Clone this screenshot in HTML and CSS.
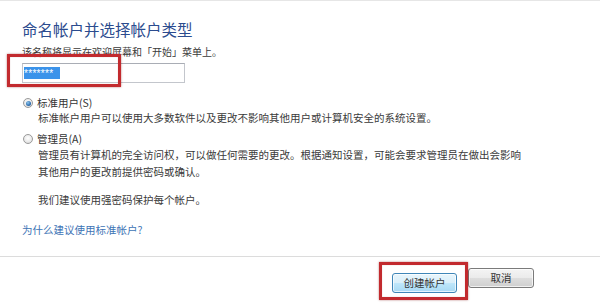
FILE: index.html
```html
<!DOCTYPE html>
<html lang="zh-CN">
<head>
<meta charset="utf-8">
<title>命名帐户并选择帐户类型</title>
<link rel="stylesheet" href="styles.css">
</head>
<body>
<div class="page">
  <main class="main">
    <h1 class="title">命名帐户并选择帐户类型</h1>
    <p class="subtitle">该名称将显示在欢迎屏幕和「开始」菜单上。</p>
    <div class="field-wrap marked">
      <div class="field"><span class="sel">*******</span></div>
    </div>

    <div class="option first">
      <span class="radio checked"></span>
      <span class="opt-label">标准用户(S)</span>
    </div>
    <p class="desc d1">标准帐户用户可以使用大多数软件以及更改不影响其他用户或计算机安全的系统设置。</p>

    <div class="option second">
      <span class="radio"></span>
      <span class="opt-label">管理员(A)</span>
    </div>
    <p class="desc d2">管理员有计算机的完全访问权，可以做任何需要的更改。根据通知设置，可能会要求管理员在做出会影响<br>其他用户的更改前提供密码或确认。</p>

    <p class="desc rec">我们建议使用强密码保护每个帐户。</p>

    <a class="link" href="#">为什么建议使用标准帐户?</a>
  </main>
  <footer class="footer">
    <span class="btn-wrap marked-btn"><button class="btn primary">创建帐户</button></span>
    <button class="btn">取消</button>
  </footer>
</div>
</body>
</html>
```

FILE: styles.css
```css
html, body {
  margin: 0;
  padding: 0;
  background: #ffffff;
}
body {
  font-family: "Noto Sans CJK SC", "Microsoft YaHei", "Noto Sans", sans-serif;
  color: #3a3a3a;
  width: 600px;
  height: 307px;
  overflow: hidden;
}
.page {
  border-top: 1px solid #e6e6e6;
  height: 306px;
  display: flex;
  flex-direction: column;
}
.main {
  padding-left: 22px;
  height: 256px;
  border-bottom: 1px solid #dcdcdc;
  box-sizing: border-box;
  display: flex;
  flex-direction: column;
  align-items: flex-start;
}
.title {
  margin: 18px 0 0;
  font-size: 15.5px;
  line-height: 20px;
  font-weight: normal;
  color: #2b4b8e;
  letter-spacing: 0;
}
.subtitle {
  margin: 6px 0 0;
  font-size: 10px;
  line-height: 14px;
  color: #3a3a3a;
}
.field-wrap {
  position: relative;
  margin-top: 4px;
}
.field {
  width: 163px;
  height: 20px;
  box-sizing: border-box;
  border: 1px solid #c3c6cc;
  border-top-color: #a9adb5;
  background: #fff;
  padding: 3px 0 0 1px;
}
.sel {
  display: inline-block;
  width: 36px;
  height: 12px;
  background: #3b93ea;
  color: #ffffff;
  font-family: "Liberation Sans", sans-serif;
  font-size: 10px;
  line-height: 14px;
  letter-spacing: 0.3px;
  overflow: hidden;
  vertical-align: top;
}
.marked::after {
  content: "";
  position: absolute;
  left: -15px;
  top: -9px;
  width: 114px;
  height: 33px;
  box-sizing: border-box;
  border: 3px solid #c22a2e;
  box-shadow: 0 0 2px rgba(120, 0, 0, 0.5), inset 0 0 1px rgba(120, 0, 0, 0.4);
}
.option {
  display: flex;
  align-items: center;
  gap: 4px;
  font-size: 10.5px;
  line-height: 14px;
  color: #333;
}
.option.first { margin-top: 13px; }
.option.second { margin-top: 7px; }
.radio {
  width: 10px;
  height: 10px;
  box-sizing: border-box;
  border-radius: 50%;
  border: 1px solid #9a9a9a;
  background: radial-gradient(circle at 50% 40%, #ffffff 0%, #e9e9e9 60%, #d2d2d2 100%);
  display: flex;
  align-items: center;
  justify-content: center;
  margin-left: 1px;
}
.radio.checked::before {
  content: "";
  width: 5px;
  height: 5px;
  border-radius: 50%;
  background: radial-gradient(circle at 40% 35%, #8fc7ee 0%, #2f6fb0 60%, #1d4f87 100%);
}
.desc {
  margin: 0;
  padding-left: 16px;
  font-size: 10.5px;
  color: #3a3a3a;
  white-space: nowrap;
}
.d1 { margin-top: 1px; line-height: 14px; }
.d2 { line-height: 17px; }
.rec { margin-top: 13px; line-height: 14px; }
.link {
  margin-top: 16px;
  font-size: 10.5px;
  line-height: 14px;
  color: #3d73b5;
  text-decoration: none;
}
.footer {
  display: flex;
  justify-content: flex-end;
  align-items: flex-start;
  gap: 11px;
  padding: 11px 66px 0 0;
  background: #ffffff;
}
.btn {
  height: 20px;
  width: 66px;
  box-sizing: border-box;
  padding: 0;
  font-family: "Noto Sans CJK SC", "Microsoft YaHei", sans-serif;
  font-size: 10.5px;
  line-height: 18px;
  color: #333;
  border: 1px solid #7b7b7b;
  border-radius: 3px;
  background: linear-gradient(#f4f4f4 0%, #ebebeb 48%, #dddddd 52%, #cfcfcf 100%);
  box-shadow: inset 0 0 0 1px rgba(255,255,255,0.7);
}
.btn.primary {
  width: 65px;
  border-color: #3f86b8;
  background: linear-gradient(#e8f5fc 0%, #d9effa 48%, #bee6fa 52%, #a7d9f4 100%);
}
.btn-wrap {
  position: relative;
  display: block;
  height: 20px;
}
.marked-btn::after {
  content: "";
  position: absolute;
  left: -13px;
  top: -6px;
  width: 89px;
  height: 38px;
  box-sizing: border-box;
  border: 3px solid #c22a2e;
  box-shadow: 0 0 2px rgba(120, 0, 0, 0.5), inset 0 0 1px rgba(120, 0, 0, 0.4);
}
```
